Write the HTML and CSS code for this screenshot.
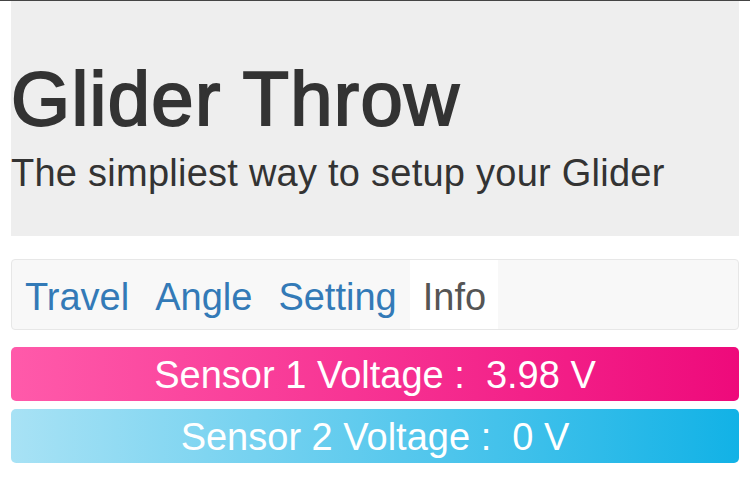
FILE: index.html
```html
<!DOCTYPE html>
<html lang="en">
<head>
<meta charset="utf-8">
<title>Glider Throw</title>
<link rel="stylesheet" href="styles.css">
</head>
<body>
<div class="page">
  <header class="jumbotron">
    <h1 class="title">Glider Throw</h1>
    <p class="lead">The simpliest way to setup your Glider</p>
  </header>
  <nav class="navbar">
    <ul class="nav">
      <li><a class="nav-link" href="#">Travel</a></li>
      <li><a class="nav-link" href="#">Angle</a></li>
      <li><a class="nav-link" href="#">Setting</a></li>
      <li><a class="nav-link active" href="#">Info</a></li>
    </ul>
  </nav>
  <div class="bars">
    <div class="bar bar-pink">Sensor 1 Voltage :&nbsp; 3.98 V</div>
    <div class="bar bar-blue">Sensor 2 Voltage :&nbsp; 0 V</div>
  </div>
</div>
</body>
</html>
```
FILE: styles.css
```css
html, body {
  margin: 0;
  padding: 0;
  background: #fff;
}
body {
  border-top: 1px solid #444;
  font-family: "Liberation Sans", Arial, sans-serif;
  color: #333;
}
.page {
  padding: 0 11px;
}
.jumbotron {
  background: #eeeeee;
  padding: 60px 0 40px;
}
.title {
  margin: 0 0 14px;
  font-size: 76px;
  line-height: 76px;
  font-weight: 400;
  letter-spacing: 1.3px;
  -webkit-text-stroke: 2px #333;
  color: #333;
}
.lead {
  margin: 0;
  font-size: 38px;
  line-height: 45px;
  letter-spacing: 0.25px;
  color: #333;
}
.navbar {
  margin-top: 23px;
  background: #f8f8f8;
  border: 1px solid #e7e7e7;
  border-radius: 4px;
  height: 69px;
}
.nav {
  list-style: none;
  margin: 0;
  padding: 0;
  display: flex;
  height: 100%;
}
.nav-link {
  display: block;
  padding: 16px 13px 10px;
  height: 43px;
  line-height: 43px;
  font-size: 38px;
  color: #337ab7;
  text-decoration: none;
}
.nav-link.active {
  background: #fff;
  color: #555;
  padding-right: 12px;
}
.bars {
  margin-top: 17px;
  display: flex;
  flex-direction: column;
  gap: 8px;
}
.bar {
  height: 52px;
  padding-top: 2px;
  line-height: 52px;
  border-radius: 5px;
  text-align: center;
  font-size: 38px;
  color: #fff;
}
.bar-pink {
  background: linear-gradient(to right, #ff5aaa, #ee0a7b);
}
.bar-blue {
  background: linear-gradient(to right, #a8e2f5, #12b2e6);
}
```
